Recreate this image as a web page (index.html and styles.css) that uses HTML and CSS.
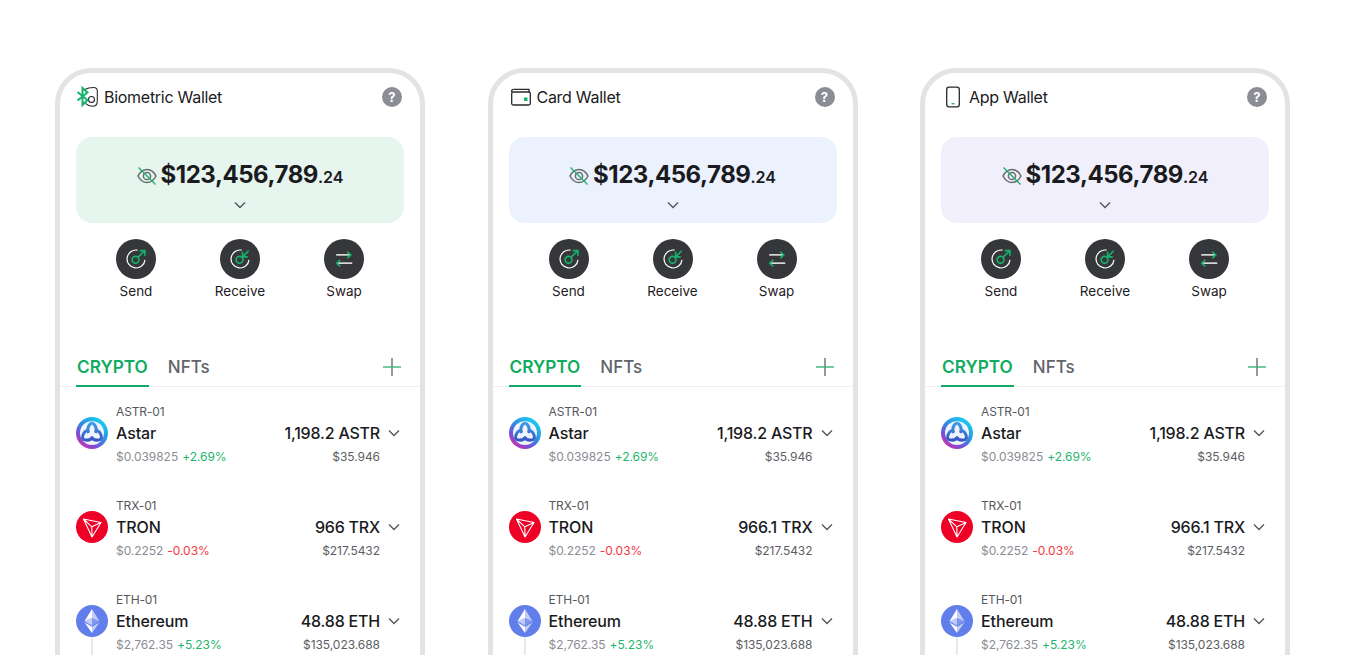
FILE: index.html
```html
<!DOCTYPE html>
<html lang="en">
<head>
  <meta charset="UTF-8" />
  <title>Wallets</title>
  <link rel="stylesheet" href="styles.css">
</head>
<body>

  <svg class="defs" width="0" height="0">
    <defs>
      <linearGradient id="astrRing" x1="0.85" y1="0" x2="0.1" y2="1">
        <stop offset="0" stop-color="#12dcf0" />
        <stop offset="0.45" stop-color="#2f8be6" />
        <stop offset="0.75" stop-color="#8a45cf" />
        <stop offset="1" stop-color="#ec2fa0" />
      </linearGradient>
      <linearGradient id="astrKnot" x1="0.5" y1="0" x2="0.5" y2="1">
        <stop offset="0" stop-color="#3aa0ea" />
        <stop offset="1" stop-color="#3a55c4" />
      </linearGradient>
      <symbol id="i-eye" viewBox="0 0 20 20">
        <path d="M1 10c2.200-4.400 5.200-6.500 9-6.500s6.800 2.100 9 6.500c-2.200 4.400-5.200 6.500-9 6.500S3.200 14.400 1 10z" fill="none" stroke="#6b6d72" stroke-width="1.500" />
        <circle cx="10" cy="10" r="3.600" fill="none" stroke="#6b6d72" stroke-width="1.500" />
        <path d="M1.500 1.500l17 17" stroke="#15b26b" stroke-width="1.300" />
      </symbol>
      <symbol id="i-send" viewBox="0 0 24 24">
        <path d="M13.700 2.350A9.800 9.800 0 1 0 21.800 13" fill="none" stroke="#fff" stroke-width="1.300" />
        <circle cx="11.500" cy="12.800" r="3.700" fill="none" stroke="#15b26b" stroke-width="1.800" />
        <path d="M14.300 10L21.500 3M16 2.800h5.700v5.700" fill="none" stroke="#15b26b" stroke-width="1.800" />
      </symbol>
      <symbol id="i-receive" viewBox="0 0 24 24">
        <path d="M13.700 2.350A9.800 9.800 0 1 0 21.800 13" fill="none" stroke="#fff" stroke-width="1.300" />
        <circle cx="11.500" cy="12.800" r="3.700" fill="none" stroke="#15b26b" stroke-width="1.800" />
        <path d="M21.500 3L15 9.500M14.800 4v5.700h5.700" fill="none" stroke="#15b26b" stroke-width="1.800" />
      </symbol>
      <symbol id="i-swap" viewBox="0 0 24 24">
        <path d="M3.500 7.500H19" fill="none" stroke="#fff" stroke-width="1.500" />
        <path d="M15.500 4l4 3.500-4 3.500" fill="none" stroke="#15b26b" stroke-width="1.700" />
        <path d="M21 16.500H5" fill="none" stroke="#fff" stroke-width="1.500" />
        <path d="M8 13l-4 3.500 4 3.500" fill="none" stroke="#15b26b" stroke-width="1.700" />
      </symbol>
      <symbol id="i-chevron" viewBox="0 0 12 8">
        <path d="M1 1.500l5 5 5-5" fill="none" stroke="#55575c" stroke-width="1.400" />
      </symbol>
      <symbol id="i-plus" viewBox="0 0 18 18">
        <path d="M9 0v18" stroke="#6b6d72" stroke-width="1.400" />
        <path d="M0 9h18" stroke="#3cb47c" stroke-width="1.400" />
      </symbol>
      <symbol id="i-astr" viewBox="0 0 32 32">
        <circle cx="16" cy="16" r="16" fill="url(#astrRing)" />
        <circle cx="16" cy="16" r="12" fill="#eef3fc" />
        <path d="M16 5.500c3.800 2.600 5 6.200 3.400 10.500M16 5.500c-3.800 2.600-5 6.200-3.400 10.500M6.500 22c-.4-4.600 1.700-7.800 6.100-9.400M6.500 22c4.200 1.900 8 1.400 11-2M25.500 22c.4-4.600-1.700-7.800-6.100-9.400M25.500 22c-4.200 1.900-8 1.400-11-2" fill="none" stroke="url(#astrKnot)" stroke-width="3" />
        <circle cx="16" cy="16" r="2.400" fill="#eef3fc" />
      </symbol>
      <symbol id="i-trx" viewBox="0 0 32 32">
        <circle cx="16" cy="16" r="16" fill="#ef0027" />
        <path d="M7.500 8l17.500 3.500L16 26 7.500 8zM7.500 8l8.300 7.800 9.200-4.300M15.800 15.800L16 26" fill="none" stroke="#fff" stroke-width="1.100" stroke-linejoin="round" />
      </symbol>
      <symbol id="i-eth" viewBox="0 0 32 32">
        <circle cx="16" cy="16" r="16" fill="#627eea" />
        <path d="M16 4v8.900l7.500 3.400z" fill="#fff" fill-opacity="0.6" />
        <path d="M16 4L8.500 16.300l7.500-3.400z" fill="#fff" />
        <path d="M16 21.800V28l7.500-10.400z" fill="#fff" fill-opacity="0.6" />
        <path d="M16 21.800V28L8.500 17.600z" fill="#fff" />
        <path d="M16 20.400l7.500-4.100L16 12.900z" fill="#fff" fill-opacity="0.2" />
        <path d="M8.500 16.300l7.500 4.100v-7.500z" fill="#fff" fill-opacity="0.6" />
      </symbol>
    </defs>
  </svg>

  <main class="wallets">

    <!-- Biometric -->
    <section class="phone">
      <header class="wallet-head">
        <svg class="wallet-icon" viewBox="0 0 24 24">
          <path d="M9 4.500c2-1.300 5.500-2 8.500-2 2.500 0 3.800 1.300 3.800 3.500v10c0 3-1.700 5.300-4.800 5.300-3 0-5.300-1.300-7-3" fill="none" stroke="#26282c" stroke-width="1.100" />
          <circle cx="15.500" cy="14.500" r="3" fill="none" stroke="#26282c" stroke-width="1.100" />
          <path d="M1.500 7l10 8-5 5V3l5 4.500-10 8" fill="none" stroke="#15b26b" stroke-width="2" />
        </svg>
        <span class="wallet-name">Biometric Wallet</span>
        <span class="help">?</span>
      </header>
      <div class="balance balance-green">
        <div class="balance-row">
          <svg class="eye"><use href="#i-eye" /></svg>
          <span class="amount">$123,456,789<small>.24</small></span>
        </div>
        <svg class="balance-chevron"><use href="#i-chevron" /></svg>
      </div>
      <div class="actions">
        <div class="action"><span class="action-btn"><svg><use href="#i-send" /></svg></span>Send</div>
        <div class="action"><span class="action-btn"><svg><use href="#i-receive" /></svg></span>Receive</div>
        <div class="action"><span class="action-btn"><svg><use href="#i-swap" /></svg></span>Swap</div>
      </div>
      <div class="tabs">
        <span class="tab active">CRYPTO</span>
        <span class="tab">NFTs</span>
        <svg class="plus"><use href="#i-plus" /></svg>
      </div>
      <div class="coin">
        <div class="coin-id">ASTR-01</div>
        <div class="coin-main">
          <svg class="coin-logo"><use href="#i-astr" /></svg>
          <span class="coin-name">Astar</span>
          <span class="coin-qty">1,198.2 ASTR</span>
          <svg class="coin-chevron"><use href="#i-chevron" /></svg>
        </div>
        <div class="coin-sub">
          <span class="price">$0.039825</span><span class="up">+2.69%</span>
          <span class="value">$35.946</span>
        </div>
      </div>
      <div class="coin">
        <div class="coin-id">TRX-01</div>
        <div class="coin-main">
          <svg class="coin-logo"><use href="#i-trx" /></svg>
          <span class="coin-name">TRON</span>
          <span class="coin-qty">966 TRX</span>
          <svg class="coin-chevron"><use href="#i-chevron" /></svg>
        </div>
        <div class="coin-sub">
          <span class="price">$0.2252</span><span class="down">-0.03%</span>
          <span class="value">$217.5432</span>
        </div>
      </div>
      <div class="coin coin-linked">
        <div class="coin-id">ETH-01</div>
        <div class="coin-main">
          <svg class="coin-logo"><use href="#i-eth" /></svg>
          <span class="coin-name">Ethereum</span>
          <span class="coin-qty">48.88 ETH</span>
          <svg class="coin-chevron"><use href="#i-chevron" /></svg>
        </div>
        <div class="coin-sub">
          <span class="price">$2,762.35</span><span class="up">+5.23%</span>
          <span class="value">$135,023.688</span>
        </div>
      </div>
    </section>

    <!-- Card -->
    <section class="phone">
      <header class="wallet-head">
        <svg class="wallet-icon" viewBox="0 0 24 24">
          <path d="M4.500 4.300h15.500v3" fill="none" stroke="#26282c" stroke-width="1.300" />
          <rect x="2.700" y="7" width="18.600" height="13" rx="1.500" fill="none" stroke="#26282c" stroke-width="1.300" />
          <path d="M2.700 7V6c0-1 .8-1.700 1.800-1.700" fill="none" stroke="#26282c" stroke-width="1.300" />
          <rect x="15" y="12.500" width="3.500" height="3.500" fill="#15b26b" />
        </svg>
        <span class="wallet-name">Card Wallet</span>
        <span class="help">?</span>
      </header>
      <div class="balance balance-blue">
        <div class="balance-row">
          <svg class="eye"><use href="#i-eye" /></svg>
          <span class="amount">$123,456,789<small>.24</small></span>
        </div>
        <svg class="balance-chevron"><use href="#i-chevron" /></svg>
      </div>
      <div class="actions">
        <div class="action"><span class="action-btn"><svg><use href="#i-send" /></svg></span>Send</div>
        <div class="action"><span class="action-btn"><svg><use href="#i-receive" /></svg></span>Receive</div>
        <div class="action"><span class="action-btn"><svg><use href="#i-swap" /></svg></span>Swap</div>
      </div>
      <div class="tabs">
        <span class="tab active">CRYPTO</span>
        <span class="tab">NFTs</span>
        <svg class="plus"><use href="#i-plus" /></svg>
      </div>
      <div class="coin">
        <div class="coin-id">ASTR-01</div>
        <div class="coin-main">
          <svg class="coin-logo"><use href="#i-astr" /></svg>
          <span class="coin-name">Astar</span>
          <span class="coin-qty">1,198.2 ASTR</span>
          <svg class="coin-chevron"><use href="#i-chevron" /></svg>
        </div>
        <div class="coin-sub">
          <span class="price">$0.039825</span><span class="up">+2.69%</span>
          <span class="value">$35.946</span>
        </div>
      </div>
      <div class="coin">
        <div class="coin-id">TRX-01</div>
        <div class="coin-main">
          <svg class="coin-logo"><use href="#i-trx" /></svg>
          <span class="coin-name">TRON</span>
          <span class="coin-qty">966.1 TRX</span>
          <svg class="coin-chevron"><use href="#i-chevron" /></svg>
        </div>
        <div class="coin-sub">
          <span class="price">$0.2252</span><span class="down">-0.03%</span>
          <span class="value">$217.5432</span>
        </div>
      </div>
      <div class="coin coin-linked">
        <div class="coin-id">ETH-01</div>
        <div class="coin-main">
          <svg class="coin-logo"><use href="#i-eth" /></svg>
          <span class="coin-name">Ethereum</span>
          <span class="coin-qty">48.88 ETH</span>
          <svg class="coin-chevron"><use href="#i-chevron" /></svg>
        </div>
        <div class="coin-sub">
          <span class="price">$2,762.35</span><span class="up">+5.23%</span>
          <span class="value">$135,023.688</span>
        </div>
      </div>
    </section>

    <!-- App -->
    <section class="phone">
      <header class="wallet-head">
        <svg class="wallet-icon" viewBox="0 0 24 24">
          <rect x="5.700" y="2.200" width="12.600" height="19.600" rx="2.200" fill="none" stroke="#26282c" stroke-width="1.300" />
          <path d="M10.500 18.700h3" stroke="#15b26b" stroke-width="1.300" />
        </svg>
        <span class="wallet-name">App Wallet</span>
        <span class="help">?</span>
      </header>
      <div class="balance balance-purple">
        <div class="balance-row">
          <svg class="eye"><use href="#i-eye" /></svg>
          <span class="amount">$123,456,789<small>.24</small></span>
        </div>
        <svg class="balance-chevron"><use href="#i-chevron" /></svg>
      </div>
      <div class="actions">
        <div class="action"><span class="action-btn"><svg><use href="#i-send" /></svg></span>Send</div>
        <div class="action"><span class="action-btn"><svg><use href="#i-receive" /></svg></span>Receive</div>
        <div class="action"><span class="action-btn"><svg><use href="#i-swap" /></svg></span>Swap</div>
      </div>
      <div class="tabs">
        <span class="tab active">CRYPTO</span>
        <span class="tab">NFTs</span>
        <svg class="plus"><use href="#i-plus" /></svg>
      </div>
      <div class="coin">
        <div class="coin-id">ASTR-01</div>
        <div class="coin-main">
          <svg class="coin-logo"><use href="#i-astr" /></svg>
          <span class="coin-name">Astar</span>
          <span class="coin-qty">1,198.2 ASTR</span>
          <svg class="coin-chevron"><use href="#i-chevron" /></svg>
        </div>
        <div class="coin-sub">
          <span class="price">$0.039825</span><span class="up">+2.69%</span>
          <span class="value">$35.946</span>
        </div>
      </div>
      <div class="coin">
        <div class="coin-id">TRX-01</div>
        <div class="coin-main">
          <svg class="coin-logo"><use href="#i-trx" /></svg>
          <span class="coin-name">TRON</span>
          <span class="coin-qty">966.1 TRX</span>
          <svg class="coin-chevron"><use href="#i-chevron" /></svg>
        </div>
        <div class="coin-sub">
          <span class="price">$0.2252</span><span class="down">-0.03%</span>
          <span class="value">$217.5432</span>
        </div>
      </div>
      <div class="coin coin-linked">
        <div class="coin-id">ETH-01</div>
        <div class="coin-main">
          <svg class="coin-logo"><use href="#i-eth" /></svg>
          <span class="coin-name">Ethereum</span>
          <span class="coin-qty">48.88 ETH</span>
          <svg class="coin-chevron"><use href="#i-chevron" /></svg>
        </div>
        <div class="coin-sub">
          <span class="price">$2,762.35</span><span class="up">+5.23%</span>
          <span class="value">$135,023.688</span>
        </div>
      </div>
    </section>

  </main>

</body>
</html>
```

FILE: styles.css
```css
* {
  box-sizing: border-box;
}

html,
body {
  margin: 0;
  padding: 0;
  height: 655px;
  overflow: hidden;
  background: #ffffff;
  font-family: Inter, "Liberation Sans", sans-serif;
  color: #1a1b1e;
}

.defs {
  display: block;
  height: 0;
}

.wallets {
  display: flex;
  gap: 62.5px;
  padding: 68px 0 0 55px;
}

.phone {
  flex: none;
  width: 370px;
  height: 720px;
  border: 5px solid #e3e3e3;
  border-radius: 36px;
  background: #ffffff;
}

/* Header */
.wallet-head {
  display: flex;
  align-items: center;
  height: 48px;
  padding: 0 18px 0 16px;
}

.wallet-icon {
  width: 24px;
  height: 24px;
  margin-right: 4px;
}

.wallet-name {
  flex: 1;
  font-size: 16px;
  line-height: 20px;
  letter-spacing: -0.28px;
}

.help {
  width: 20px;
  height: 20px;
  border-radius: 50%;
  background: #8b8c94;
  color: #ffffff;
  font-size: 13px;
  font-weight: 700;
  line-height: 20px;
  text-align: center;
}

/* Balance */
.balance {
  display: flex;
  flex-direction: column;
  align-items: center;
  height: 86px;
  margin: 16px 16px 0;
  padding-top: 23px;
  border-radius: 16px;
}

.balance-green {
  background: #e6f5ee;
}

.balance-blue {
  background: #ebf1fd;
}

.balance-purple {
  background: #f1effc;
}

.balance-row {
  display: flex;
  align-items: center;
  height: 32px;
}

.eye {
  width: 20px;
  height: 20px;
  margin-right: 4px;
}

.amount {
  font-size: 24px;
  font-weight: 700;
  line-height: 32px;
  letter-spacing: -0.45px;
  color: #1a1b1e;
}

.amount small {
  font-size: 16px;
  font-weight: 600;
  letter-spacing: 0;
}

.balance-chevron {
  width: 12px;
  height: 8px;
  margin-top: 9px;
}

/* Send / Receive / Swap */
.actions {
  display: flex;
  justify-content: center;
  margin-top: 16px;
}

.action {
  display: flex;
  flex-direction: column;
  align-items: center;
  width: 104px;
  font-size: 13.5px;
  line-height: 16px;
  color: #1f2024;
}

.action-btn {
  display: flex;
  align-items: center;
  justify-content: center;
  width: 40px;
  height: 40px;
  margin-bottom: 4px;
  border-radius: 50%;
  background: #36373b;
}

.action-btn svg {
  width: 22px;
  height: 22px;
}

/* Tabs */
.tabs {
  display: flex;
  align-items: center;
  height: 38px;
  margin-top: 50px;
  padding: 0 19px 0 16px;
  border-bottom: 1px solid #f0f0f0;
}

.tab {
  display: flex;
  align-items: center;
  height: 38px;
  margin-right: 19px;
  padding-bottom: 2px;
  font-size: 17px;
  font-weight: 500;
  color: #62646a;
}

.tab.active {
  padding: 0 1px 2px;
  font-size: 17.2px;
  font-weight: 600;
  color: #0fab62;
  box-shadow: inset 0 -2px 0 #0fab62;
}

.plus {
  width: 18px;
  height: 18px;
  margin: 0 0 2px auto;
}

/* Coin rows */
.coin {
  position: relative;
  height: 94px;
  padding: 0 16px;
}

.coin-id {
  padding: 17px 0 0 40px;
  font-size: 12px;
  line-height: 16px;
  letter-spacing: -0.15px;
  color: #55575c;
}

.coin-main {
  display: flex;
  align-items: center;
  height: 26px;
}

.coin-logo {
  flex: none;
  width: 32px;
  height: 32px;
  margin-right: 8px;
}

.coin-name {
  flex: 1;
  font-size: 16px;
  font-weight: 500;
  letter-spacing: -0.1px;
  color: #1a1b1e;
}

.coin-qty {
  font-size: 16px;
  font-weight: 500;
  letter-spacing: -0.2px;
  color: #1a1b1e;
}

.coin-chevron {
  flex: none;
  width: 12px;
  height: 8px;
  margin: 0 4px 0 8px;
}

.coin-sub {
  display: flex;
  align-items: center;
  height: 18px;
  margin-top: 2px;
  padding: 0 24px 0 40px;
  font-size: 12px;
  line-height: 18px;
  letter-spacing: -0.05px;
}

.price {
  margin-right: 4px;
  color: #8b8c94;
}

.up {
  color: #1fb56d;
}

.down {
  color: #f5383f;
}

.value {
  margin-left: auto;
  color: #5c5e63;
}

/* connector below a coin logo */
.coin-linked::after {
  content: "";
  position: absolute;
  left: 31px;
  top: 62px;
  width: 2px;
  height: 40px;
  background: #e6e8ef;
}
```
